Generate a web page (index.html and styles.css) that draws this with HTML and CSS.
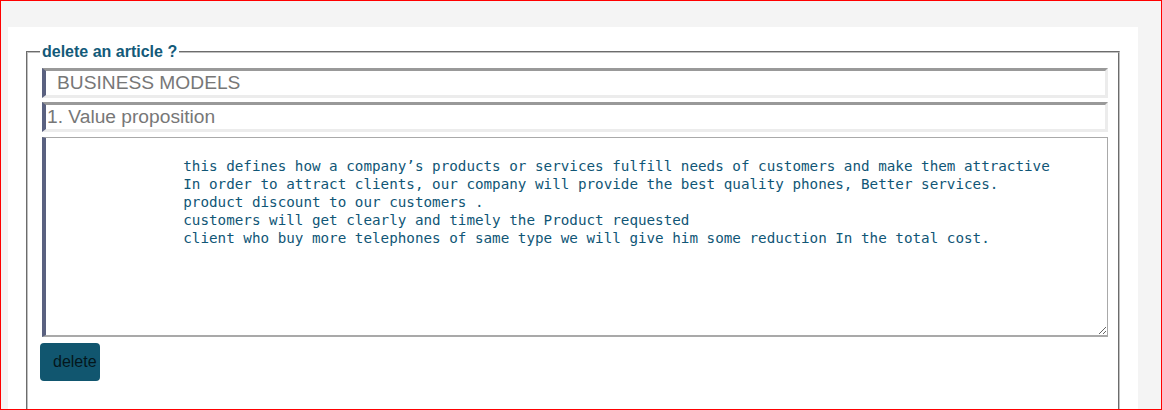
FILE: index.html
```html
<!DOCTYPE html>
<html lang="en">
<head>
<meta charset="utf-8">
<title>delete an article</title>
<link rel="stylesheet" href="styles.css">
</head>
<body>
<div class="frame">
  <main class="card">
    <form class="delete-form">
      <fieldset class="box">
        <legend class="box-title">delete an article ?</legend>
        <input class="field field-title" type="text" value="BUSINESS MODELS" readonly>
        <input class="field" type="text" value="1. Value proposition" readonly>
        <textarea class="body-text" readonly>

                this defines how a company’s products or services fulfill needs of customers and make them attractive
                In order to attract clients, our company will provide the best quality phones, Better services.
                product discount to our customers .
                customers will get clearly and timely the Product requested
                client who buy more telephones of same type we will give him some reduction In the total cost.
</textarea>
        <button class="btn-delete" type="button">delete</button>
      </fieldset>
    </form>
  </main>
</div>
</body>
</html>
```

FILE: styles.css
```css
html, body {
  margin: 0;
  padding: 0;
}

body {
  font-family: "Liberation Sans", Arial, sans-serif;
}

.frame {
  box-sizing: border-box;
  width: 1162px;
  height: 410px;
  border: 1px solid #ff0000;
  background: #f4f4f4;
  padding: 26px 23px 0 7px;
  overflow: hidden;
}

.card {
  background: #ffffff;
  height: 100%;
  padding: 16px 18px 0 18px;
  box-sizing: border-box;
}

.delete-form {
  margin: 0;
}

.box {
  margin: 0;
  padding: 7px 12px 40px 12px;
  border: 2px groove #c0c0c0;
  display: flex;
  flex-direction: column;
  align-items: flex-start;
}

.box-title {
  padding: 0 2px;
  font-weight: bold;
  font-size: 16px;
  color: #135a79;
}

.field {
  box-sizing: border-box;
  width: 100%;
  margin: 0 0 4px 2px;
  height: 30px;
  border-top: 3px solid #999999;
  border-right: 3px solid #ececec;
  border-bottom: 3px solid #ececec;
  border-left: 4px solid #5a6180;
  padding: 0 0 0 1px;
  font-family: "Liberation Sans", Arial, sans-serif;
  font-size: 19.2px;
  color: #777777;
  background: #ffffff;
  outline: none;
}

.field-title {
  padding-left: 11px;
}

.body-text {
  box-sizing: border-box;
  width: 100%;
  margin: 1px 0 0 2px;
  height: 200px;
  border: 1px solid #a9a9a9;
  border-bottom-width: 2px;
  border-left: 4px solid #5a6180;
  padding: 1px 0 2px 0;
  font-family: "DejaVu Sans Mono", "Liberation Mono", monospace;
  font-size: 14.25px;
  line-height: 18px;
  color: #105676;
  background: #ffffff;
  resize: both;
  white-space: pre;
  overflow: hidden;
  outline: none;
}

.btn-delete {
  margin-top: 6px;
  height: 38px;
  width: 60px;
  padding: 0 0 0 13px;
  text-align: left;
  background: #11566f;
  border: none;
  border-radius: 4px;
  font-family: "Liberation Sans", Arial, sans-serif;
  font-size: 16px;
  color: #04161c;
  cursor: pointer;
}
```
